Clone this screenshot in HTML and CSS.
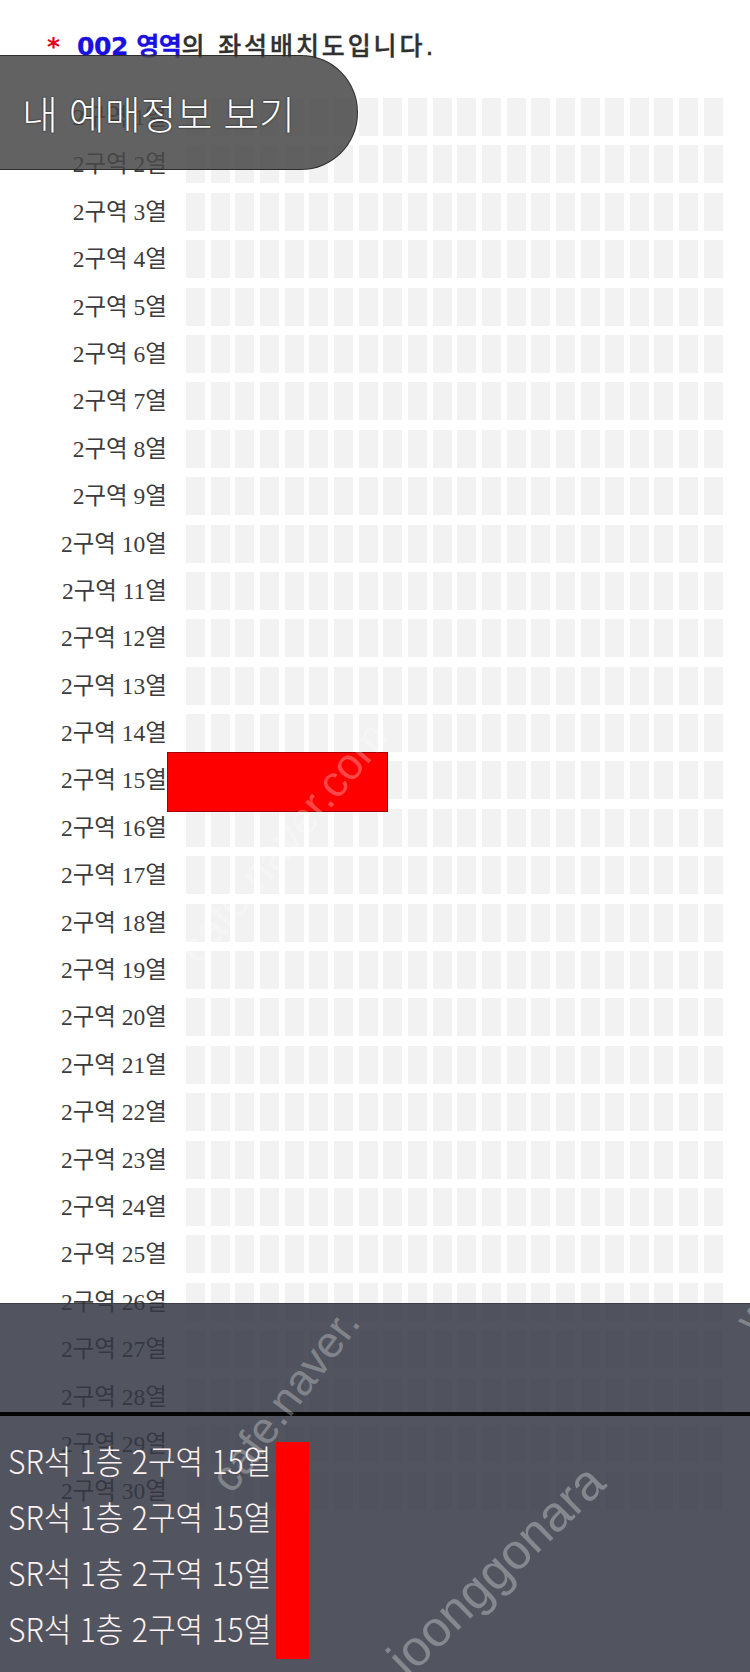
FILE: index.html
```html
<!DOCTYPE html>
<html lang="ko">
<head>
<meta charset="utf-8">
<title>좌석배치도</title>
<link rel="stylesheet" href="styles.css">
</head>
<body>
<div class="page">
  <h1 class="title"><span class="star">*</span> <b class="zone">002 영역</b>의 좌석배치도입니다.</h1>

  <div class="map">
    <div class="row"><span class="label">2구역 1열</span><div class="seats"><i></i><i></i><i></i><i></i><i></i><i></i><i></i><i></i><i></i><i></i><i></i><i></i><i></i><i></i><i></i><i></i><i></i><i></i><i></i><i></i><i></i><i></i></div></div>
    <div class="row"><span class="label">2구역 2열</span><div class="seats"><i></i><i></i><i></i><i></i><i></i><i></i><i></i><i></i><i></i><i></i><i></i><i></i><i></i><i></i><i></i><i></i><i></i><i></i><i></i><i></i><i></i><i></i></div></div>
    <div class="row"><span class="label">2구역 3열</span><div class="seats"><i></i><i></i><i></i><i></i><i></i><i></i><i></i><i></i><i></i><i></i><i></i><i></i><i></i><i></i><i></i><i></i><i></i><i></i><i></i><i></i><i></i><i></i></div></div>
    <div class="row"><span class="label">2구역 4열</span><div class="seats"><i></i><i></i><i></i><i></i><i></i><i></i><i></i><i></i><i></i><i></i><i></i><i></i><i></i><i></i><i></i><i></i><i></i><i></i><i></i><i></i><i></i><i></i></div></div>
    <div class="row"><span class="label">2구역 5열</span><div class="seats"><i></i><i></i><i></i><i></i><i></i><i></i><i></i><i></i><i></i><i></i><i></i><i></i><i></i><i></i><i></i><i></i><i></i><i></i><i></i><i></i><i></i><i></i></div></div>
    <div class="row"><span class="label">2구역 6열</span><div class="seats"><i></i><i></i><i></i><i></i><i></i><i></i><i></i><i></i><i></i><i></i><i></i><i></i><i></i><i></i><i></i><i></i><i></i><i></i><i></i><i></i><i></i><i></i></div></div>
    <div class="row"><span class="label">2구역 7열</span><div class="seats"><i></i><i></i><i></i><i></i><i></i><i></i><i></i><i></i><i></i><i></i><i></i><i></i><i></i><i></i><i></i><i></i><i></i><i></i><i></i><i></i><i></i><i></i></div></div>
    <div class="row"><span class="label">2구역 8열</span><div class="seats"><i></i><i></i><i></i><i></i><i></i><i></i><i></i><i></i><i></i><i></i><i></i><i></i><i></i><i></i><i></i><i></i><i></i><i></i><i></i><i></i><i></i><i></i></div></div>
    <div class="row"><span class="label">2구역 9열</span><div class="seats"><i></i><i></i><i></i><i></i><i></i><i></i><i></i><i></i><i></i><i></i><i></i><i></i><i></i><i></i><i></i><i></i><i></i><i></i><i></i><i></i><i></i><i></i></div></div>
    <div class="row"><span class="label">2구역 10열</span><div class="seats"><i></i><i></i><i></i><i></i><i></i><i></i><i></i><i></i><i></i><i></i><i></i><i></i><i></i><i></i><i></i><i></i><i></i><i></i><i></i><i></i><i></i><i></i></div></div>
    <div class="row"><span class="label">2구역 11열</span><div class="seats"><i></i><i></i><i></i><i></i><i></i><i></i><i></i><i></i><i></i><i></i><i></i><i></i><i></i><i></i><i></i><i></i><i></i><i></i><i></i><i></i><i></i><i></i></div></div>
    <div class="row"><span class="label">2구역 12열</span><div class="seats"><i></i><i></i><i></i><i></i><i></i><i></i><i></i><i></i><i></i><i></i><i></i><i></i><i></i><i></i><i></i><i></i><i></i><i></i><i></i><i></i><i></i><i></i></div></div>
    <div class="row"><span class="label">2구역 13열</span><div class="seats"><i></i><i></i><i></i><i></i><i></i><i></i><i></i><i></i><i></i><i></i><i></i><i></i><i></i><i></i><i></i><i></i><i></i><i></i><i></i><i></i><i></i><i></i></div></div>
    <div class="row"><span class="label">2구역 14열</span><div class="seats"><i></i><i></i><i></i><i></i><i></i><i></i><i></i><i></i><i></i><i></i><i></i><i></i><i></i><i></i><i></i><i></i><i></i><i></i><i></i><i></i><i></i><i></i></div></div>
    <div class="row picked"><span class="label">2구역 15열</span><div class="seats"><i></i><i></i><i></i><i></i><i></i><i></i><i></i><i></i><i></i><i></i><i></i><i></i><i></i><i></i><i></i><i></i><i></i><i></i><i></i><i></i><i></i><i></i></div><span class="redact"></span></div>
    <div class="row"><span class="label">2구역 16열</span><div class="seats"><i></i><i></i><i></i><i></i><i></i><i></i><i></i><i></i><i></i><i></i><i></i><i></i><i></i><i></i><i></i><i></i><i></i><i></i><i></i><i></i><i></i><i></i></div></div>
    <div class="row"><span class="label">2구역 17열</span><div class="seats"><i></i><i></i><i></i><i></i><i></i><i></i><i></i><i></i><i></i><i></i><i></i><i></i><i></i><i></i><i></i><i></i><i></i><i></i><i></i><i></i><i></i><i></i></div></div>
    <div class="row"><span class="label">2구역 18열</span><div class="seats"><i></i><i></i><i></i><i></i><i></i><i></i><i></i><i></i><i></i><i></i><i></i><i></i><i></i><i></i><i></i><i></i><i></i><i></i><i></i><i></i><i></i><i></i></div></div>
    <div class="row"><span class="label">2구역 19열</span><div class="seats"><i></i><i></i><i></i><i></i><i></i><i></i><i></i><i></i><i></i><i></i><i></i><i></i><i></i><i></i><i></i><i></i><i></i><i></i><i></i><i></i><i></i><i></i></div></div>
    <div class="row"><span class="label">2구역 20열</span><div class="seats"><i></i><i></i><i></i><i></i><i></i><i></i><i></i><i></i><i></i><i></i><i></i><i></i><i></i><i></i><i></i><i></i><i></i><i></i><i></i><i></i><i></i><i></i></div></div>
    <div class="row"><span class="label">2구역 21열</span><div class="seats"><i></i><i></i><i></i><i></i><i></i><i></i><i></i><i></i><i></i><i></i><i></i><i></i><i></i><i></i><i></i><i></i><i></i><i></i><i></i><i></i><i></i><i></i></div></div>
    <div class="row"><span class="label">2구역 22열</span><div class="seats"><i></i><i></i><i></i><i></i><i></i><i></i><i></i><i></i><i></i><i></i><i></i><i></i><i></i><i></i><i></i><i></i><i></i><i></i><i></i><i></i><i></i><i></i></div></div>
    <div class="row"><span class="label">2구역 23열</span><div class="seats"><i></i><i></i><i></i><i></i><i></i><i></i><i></i><i></i><i></i><i></i><i></i><i></i><i></i><i></i><i></i><i></i><i></i><i></i><i></i><i></i><i></i><i></i></div></div>
    <div class="row"><span class="label">2구역 24열</span><div class="seats"><i></i><i></i><i></i><i></i><i></i><i></i><i></i><i></i><i></i><i></i><i></i><i></i><i></i><i></i><i></i><i></i><i></i><i></i><i></i><i></i><i></i><i></i></div></div>
    <div class="row"><span class="label">2구역 25열</span><div class="seats"><i></i><i></i><i></i><i></i><i></i><i></i><i></i><i></i><i></i><i></i><i></i><i></i><i></i><i></i><i></i><i></i><i></i><i></i><i></i><i></i><i></i><i></i></div></div>
    <div class="row"><span class="label">2구역 26열</span><div class="seats"><i></i><i></i><i></i><i></i><i></i><i></i><i></i><i></i><i></i><i></i><i></i><i></i><i></i><i></i><i></i><i></i><i></i><i></i><i></i><i></i><i></i><i></i></div></div>
    <div class="row"><span class="label">2구역 27열</span><div class="seats"><i></i><i></i><i></i><i></i><i></i><i></i><i></i><i></i><i></i><i></i><i></i><i></i><i></i><i></i><i></i><i></i><i></i><i></i><i></i><i></i><i></i><i></i></div></div>
    <div class="row"><span class="label">2구역 28열</span><div class="seats"><i></i><i></i><i></i><i></i><i></i><i></i><i></i><i></i><i></i><i></i><i></i><i></i><i></i><i></i><i></i><i></i><i></i><i></i><i></i><i></i><i></i><i></i></div></div>
    <div class="row"><span class="label">2구역 29열</span><div class="seats"><i></i><i></i><i></i><i></i><i></i><i></i><i></i><i></i><i></i><i></i><i></i><i></i><i></i><i></i><i></i><i></i><i></i><i></i><i></i><i></i><i></i><i></i></div></div>
    <div class="row"><span class="label">2구역 30열</span><div class="seats"><i></i><i></i><i></i><i></i><i></i><i></i><i></i><i></i><i></i><i></i><i></i><i></i><i></i><i></i><i></i><i></i><i></i><i></i><i></i><i></i><i></i><i></i></div></div>
  </div>

  <div class="my-booking">내 예매정보 보기</div>

  <div class="sheet">
    <div class="sheet-top"></div>
    <div class="sheet-rule"></div>
    <div class="sheet-body">
      <ul class="tickets">
        <li>SR석 1층 2구역 15열</li>
        <li>SR석 1층 2구역 15열</li>
        <li>SR석 1층 2구역 15열</li>
        <li>SR석 1층 2구역 15열</li>
      </ul>
      <div class="ticket-redact"></div>
    </div>
  </div>

  <div class="watermarks">
    <span class="wm wm-a">cafe.naver.com</span>
    <span class="wm wm-b">cafe.naver.</span>
    <span class="wm wm-c">joonggonara</span>
    <span class="wm wm-d">www</span>
  </div>
</div>
</body>
</html>
```

FILE: styles.css
```css
html, body {
  margin: 0;
  padding: 0;
  background: #ffffff;
}

.page {
  position: relative;
  width: 750px;
  height: 1672px;
  overflow: hidden;
  background: #ffffff;
}

.title {
  margin: 0;
  padding: 31px 0 0 47px;
  height: 32px;
  line-height: 32px;
  font-family: "DejaVu Sans", "Noto Sans CJK KR", sans-serif;
  font-size: 25px;
  font-weight: 500;
  letter-spacing: 2.9px;
  color: #303030;
  -webkit-text-stroke: 0.35px #303030;
  white-space: nowrap;
}

.star {
  display: inline-block;
  margin-right: 6px;
  color: #e8001a;
  font-weight: bold;
  letter-spacing: 0;
  -webkit-text-stroke: 0;
}

.zone {
  color: #1a10e0;
  font-weight: bold;
  letter-spacing: -0.4px;
  -webkit-text-stroke: 0.3px #1a10e0;
}

.map {
  display: flex;
  flex-direction: column;
  row-gap: 9.4px;
  padding-top: 35px;
}

.row {
  display: flex;
  align-items: center;
  height: 38px;
}

.row.picked {
  position: relative;
}

.label {
  box-sizing: border-box;
  width: 167px;
  text-align: right;
  font-family: "Liberation Serif", "Noto Sans CJK KR", serif;
  font-size: 23.5px;
  line-height: 38px;
  color: #3c3c3c;
  white-space: nowrap;
}

.seats {
  display: grid;
  grid-template-columns: repeat(22, 19px);
  column-gap: 5.67px;
  margin-left: 19px;
  height: 38px;
}

.seats i {
  display: block;
  height: 38px;
  background: #f2f2f2;
}

.redact {
  position: absolute;
  left: 167px;
  top: -9px;
  width: 221px;
  height: 60px;
  box-sizing: border-box;
  background: #ff0000;
  border: 1px solid #a30000;
}

.my-booking {
  position: absolute;
  top: 55px;
  left: 0;
  box-sizing: border-box;
  width: 358px;
  height: 115px;
  padding-left: 22px;
  border: 1px solid rgba(30, 30, 30, 0.75);
  border-left: 0;
  border-radius: 0 57px 57px 0;
  background: rgba(72, 72, 72, 0.86);
  color: #ffffff;
  font-family: "Noto Sans CJK KR", sans-serif;
  font-size: 39px;
  font-weight: 300;
  line-height: 112px;
  text-shadow: 0 0 2px rgba(0, 0, 0, 0.85);
  white-space: nowrap;
}

.sheet {
  position: absolute;
  top: 1303px;
  left: 0;
  width: 750px;
  bottom: 0;
  display: flex;
  flex-direction: column;
  border-top: 1px solid rgba(40, 42, 50, 0.9);
}

.sheet-top {
  height: 108px;
  background: rgba(52, 55, 67, 0.85);
}

.sheet-rule {
  height: 4px;
  background: #050505;
}

.sheet-body {
  flex: 1;
  display: flex;
  align-items: flex-start;
  padding: 16px 0 0 8px;
  background: rgba(52, 55, 67, 0.85);
}

.tickets {
  list-style: none;
  margin: 0;
  padding: 0;
  width: 268px;
}

.tickets li {
  font-family: "Noto Sans CJK KR", sans-serif;
  font-size: 33px;
  font-weight: 300;
  line-height: 56px;
  color: #fdf1f1;
  white-space: nowrap;
  transform: scaleX(0.91);
  transform-origin: left center;
}

.ticket-redact {
  width: 33px;
  height: 217px;
  margin-top: 10px;
  background: #ff0000;
}

.watermarks {
  position: absolute;
  inset: 0;
  pointer-events: none;
}

.wm {
  position: absolute;
  font-family: "Liberation Sans", sans-serif;
  font-size: 44px;
  color: rgba(255, 255, 255, 0.3);
  white-space: nowrap;
  transform: translate(-50%, -50%) rotate(-50deg);
}

.wm-a {
  left: 283px;
  top: 842px;
}

.wm-b {
  left: 285px;
  top: 1400px;
  transform: translate(-50%, -50%) rotate(-53deg);
}

.wm-c {
  left: 496px;
  top: 1570px;
  font-size: 50px;
  transform: translate(-50%, -50%) rotate(-44deg);
}

.wm-d {
  left: 775px;
  top: 1290px;
}
```
